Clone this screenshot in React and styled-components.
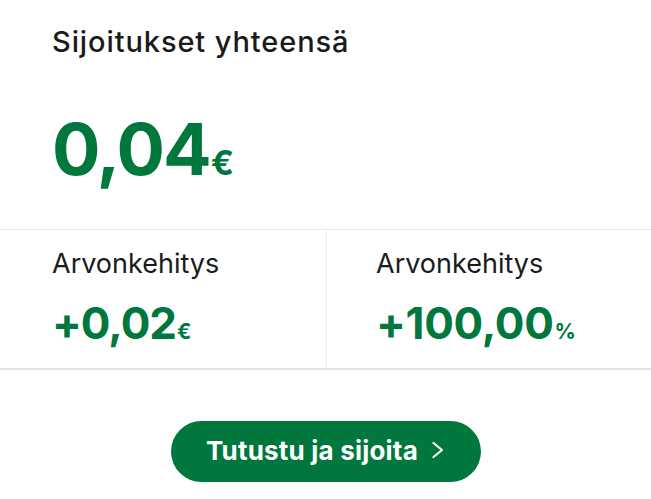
import React from "react";
import styled, { createGlobalStyle } from "styled-components";

const Global = createGlobalStyle`
  html, body { margin: 0; padding: 0; background: #ffffff; }
  body { font-family: Inter, "Liberation Sans", sans-serif; }
`;

const Page = styled.div`
  width: 651px;
  height: 499px;
  background: #fff;
  display: flex;
  flex-direction: column;
  overflow: hidden;
`;

const Header = styled.section`
  padding: 25px 0 0 52px;
  height: 229px;
  box-sizing: border-box;
  flex-shrink: 0;
`;

const Title = styled.h1`
  margin: 0;
  font-size: 29px;
  font-weight: 500;
  color: #1b1b1b;
  letter-spacing: 0.9px;
  line-height: 34px;
`;

const Total = styled.div`
  margin-top: 54px;
  display: flex;
  align-items: baseline;
  color: #00773d;
  font-weight: 700;
  line-height: 1;
`;

const Big = styled.span`
  font-size: ${(p) => p.$size}px;
  letter-spacing: ${(p) => p.$ls || 0}px;
`;

const Unit = styled.span`
  font-size: ${(p) => p.$size}px;
  margin-left: ${(p) => p.$ml || 1}px;
`;

const Stats = styled.div`
  display: grid;
  grid-template-columns: 326px 1fr;
  border-top: 1px solid #e6e6e6;
  border-bottom: 2px solid #e4e4e4;
  height: 141px;
  box-sizing: border-box;
  flex-shrink: 0;
`;

const Stat = styled.div`
  padding: 18px 0 0 ${(p) => p.$pl}px;
  border-left: ${(p) => (p.$divider ? "1px solid #efefef" : "none")};
`;

const Label = styled.div`
  font-size: 27px;
  font-weight: 400;
  color: #1b1b1b;
  line-height: 32px;
`;

const Value = styled.div`
  margin-top: 21px;
  display: flex;
  align-items: baseline;
  color: #00773d;
  font-weight: 700;
  line-height: 1;
`;

const Footer = styled.div`
  display: flex;
  justify-content: center;
  padding-top: 51px;
`;

const Button = styled.button`
  width: 310px;
  height: 61px;
  border: none;
  border-radius: 31px;
  background: #00773d;
  color: #fff;
  font-family: inherit;
  font-size: 26px;
  font-weight: 700;
  letter-spacing: 0.2px;
  display: flex;
  align-items: center;
  justify-content: center;
  gap: 13px;
  padding: 0 0 3px 0;
  cursor: pointer;
`;

const Chevron = () => (
  <svg width="14" height="18" viewBox="0 0 14 18" fill="none">
    <path d="M2.5 2 L11 9 L2.5 16" stroke="#fff" strokeWidth="2.2" strokeLinecap="round" strokeLinejoin="round" />
  </svg>
);

export default function App() {
  return (
    <Page>
      <Global />
      <Header>
        <Title>Sijoitukset yhteensä</Title>
        <Total>
          <Big $size={72} $ls={-2}>0,04</Big>
          <Unit $size={34}>€</Unit>
        </Total>
      </Header>
      <Stats>
        <Stat $pl={52}>
          <Label>Arvonkehitys</Label>
          <Value>
            <Big $size={44} $ls={-1}>+0,02</Big>
            <Unit $size={21}>€</Unit>
          </Value>
        </Stat>
        <Stat $pl={49} $divider>
          <Label>Arvonkehitys</Label>
          <Value>
            <Big $size={44} $ls={-0.3}>+100,00</Big>
            <Unit $size={21}>%</Unit>
          </Value>
        </Stat>
      </Stats>
      <Footer>
        <Button>
          Tutustu ja sijoita
          <Chevron />
        </Button>
      </Footer>
    </Page>
  );
}
